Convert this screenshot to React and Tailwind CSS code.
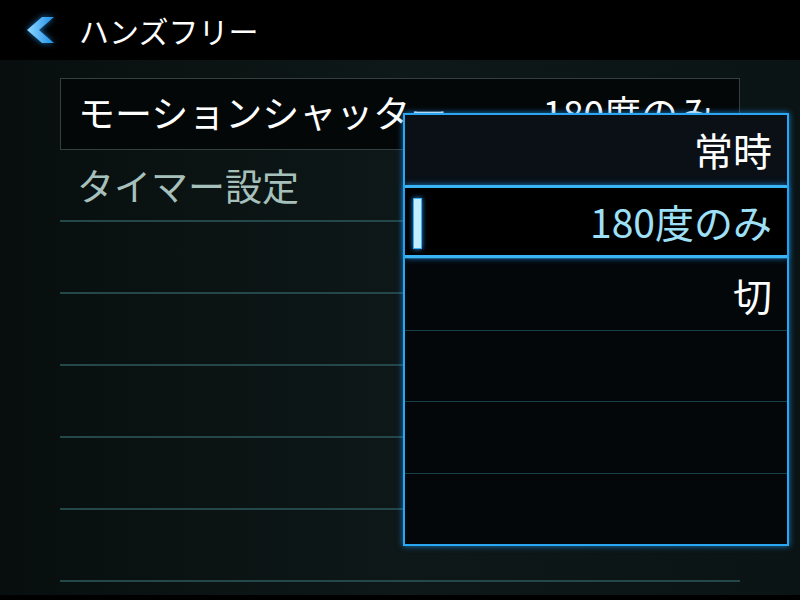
import React from 'react';

const font = { fontFamily: '"Noto Sans CJK JP", "Noto Sans", sans-serif' };

const rows = [
  { label: 'モーションシャッター', value: '180度のみ', active: true },
  { label: 'タイマー設定' },
  {},
  {},
  {},
  {},
  {},
];

const options = ['常時', '180度のみ', '切', '', '', ''];

const BackChevron = () => (
  <svg width="32" height="30" viewBox="0 0 32 30" className="drop-shadow-[0_0_3px_rgba(40,160,255,0.7)]">
    <defs>
      <linearGradient id="chev" x1="0" y1="0" x2="1" y2="0">
        <stop offset="0" stopColor="#8ed8ff" />
        <stop offset="1" stopColor="#1e8ee6" />
      </linearGradient>
    </defs>
    <polygon points="17,2 29,2 14,15 29,28 17,28 2,15" fill="url(#chev)" />
  </svg>
);

const App = () => {
  return (
    <div className="w-[800px] h-[600px] bg-black flex flex-col overflow-hidden" style={font}>
      {/* Header */}
      <div className="h-[60px] flex items-center pl-[25px] shrink-0">
        <BackChevron />
        <span className="ml-[22px] text-[30px] leading-none text-white">ハンズフリー</span>
      </div>

      {/* Settings list */}
      <div className="relative flex-1 bg-gradient-to-r from-[#080e0e] via-[#0e1818] to-[#0b1414] px-[60px] pt-[18px]">
        <div className="flex flex-col">
          {rows.map((row, i) =>
            row.active ? (
              <div
                key={i}
                className="h-[72px] flex items-center justify-between pl-[17px] pr-[24px] pb-[3px] bg-[#040707] border border-[#34403f]"
              >
                <span className="text-[37px] leading-none text-white whitespace-nowrap">{row.label}</span>
                <span className="text-[37px] leading-none text-white whitespace-nowrap">{row.value}</span>
              </div>
            ) : (
              <div key={i} className="h-[72px] flex items-center px-[17px] border-b-2 border-[#24474a]">
                {row.label && (
                  <span className="text-[37px] leading-none text-[#a6c0bb] whitespace-nowrap">{row.label}</span>
                )}
              </div>
            )
          )}
        </div>

        {/* Dropdown */}
        <div className="absolute left-[403px] top-[53px] w-[386px] h-[433px] bg-[#04070a] border-2 border-[#2aa6f2] shadow-[0_0_6px_rgba(30,150,240,0.8)] flex flex-col">
          {options.map((opt, i) => {
            const selected = i === 1;
            return (
              <div
                key={i}
                className={
                  selected
                    ? 'relative h-[74px] flex items-center justify-end pr-[15px] bg-black border-y-[3px] border-[#3bb4f5] shadow-[0_0_6px_rgba(30,150,240,0.8)]'
                    : i === 0
                    ? 'h-[70px] flex items-center justify-end pr-[15px] bg-[#0a1016]'
                    : 'h-[72px] flex items-center justify-end pr-[15px] border-t border-[#16414b] first:border-t-0'
                }
              >
                {selected && (
                  <div className="absolute left-[8px] top-[10px] w-[9px] h-[51px] bg-[#c4ecff] border border-[#3aaef5] shadow-[0_0_5px_rgba(40,160,255,0.9)]" />
                )}
                <span
                  className={
                    'text-[39px] leading-none whitespace-nowrap ' + (selected ? 'text-[#9ee0f8]' : 'text-white')
                  }
                >
                  {opt}
                </span>
              </div>
            );
          })}
        </div>
      </div>

      <div className="h-[5px] bg-black shrink-0" />
    </div>
  );
};

export default App;
